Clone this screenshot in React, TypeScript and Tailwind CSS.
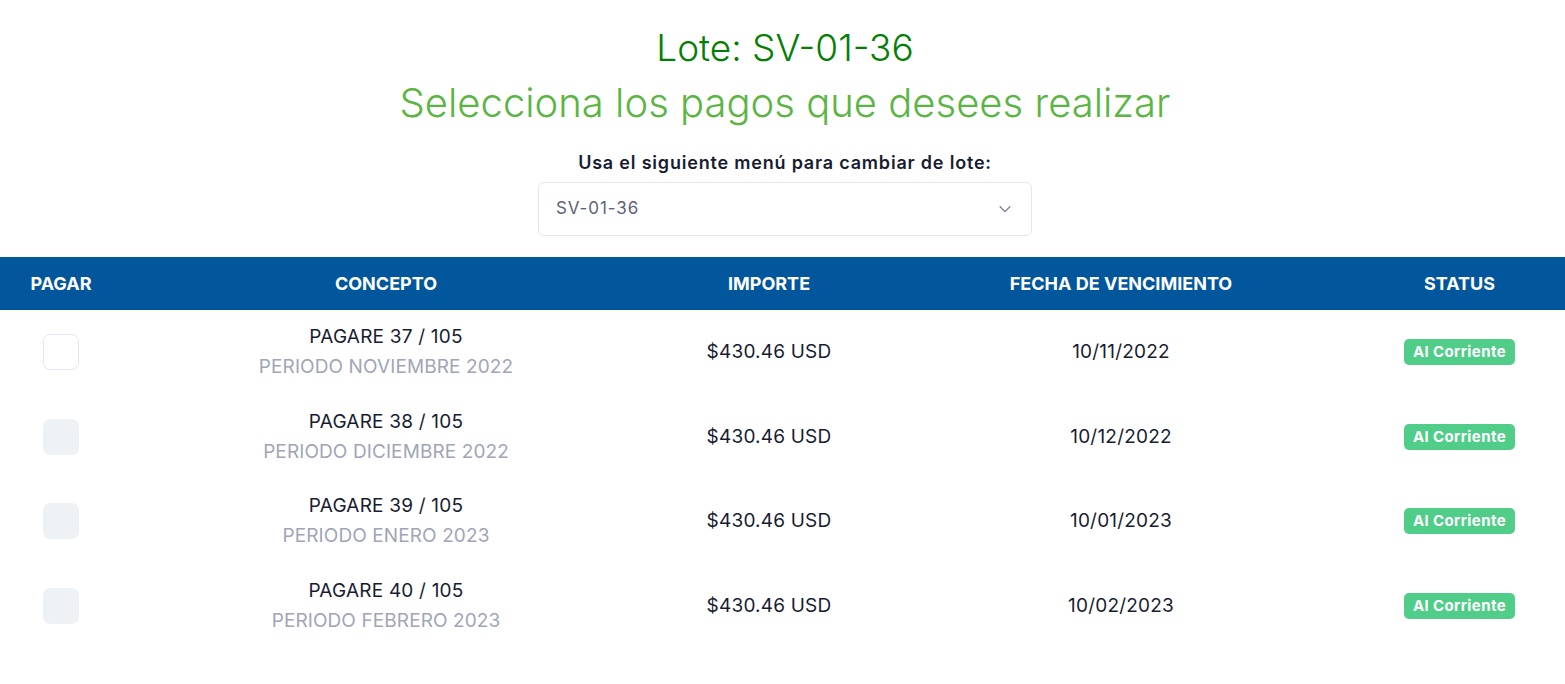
import React from "react";

const rows = [
  { n: 37, periodo: "PERIODO NOVIEMBRE 2022", fecha: "10/11/2022", enabled: true },
  { n: 38, periodo: "PERIODO DICIEMBRE 2022", fecha: "10/12/2022", enabled: false },
  { n: 39, periodo: "PERIODO ENERO 2023", fecha: "10/01/2023", enabled: false },
  { n: 40, periodo: "PERIODO FEBRERO 2023", fecha: "10/02/2023", enabled: false },
];

export default function App() {
  return (
    <div className="min-h-screen bg-white font-['Inter',sans-serif] text-[#181c32]">
      <div className="flex flex-col items-center pl-[5px] pt-[24px]">
        <h1 className="text-[37px] leading-[48px] font-light text-[#038003]">Lote: SV-01-36</h1>
        <h2 className="mt-[6px] text-[40px] leading-[50px] font-light text-[#5bb543]">
          Selecciona los pagos que desees realizar
        </h2>
        <label className="mt-[23px] text-[18px] leading-[24px] font-semibold tracking-[0.8px] text-[#181c32]">
          Usa el siguiente menú para cambiar de lote:
        </label>
        <div className="mt-[7px] flex h-[54px] w-[494px] items-center justify-between rounded-[6px] border border-[#e4e6ef] pl-[17px] pr-[19px]">
          <span className="text-[17px] tracking-[0.9px] text-[#5e6278]">SV-01-36</span>
          <svg width="14" height="14" viewBox="0 0 16 16" fill="none">
            <path d="M2.5 5.5L8 11l5.5-5.5" stroke="#7e8299" strokeWidth="1.6" strokeLinecap="round" strokeLinejoin="round" />
          </svg>
        </div>
      </div>
      <table className="mt-[21px] w-full border-collapse">
        <thead>
          <tr className="h-[53px] bg-[#02569c] text-white">
            <th className="w-[122px] text-center text-[18px] font-bold">PAGAR</th>
            <th className="w-[528px] text-center text-[18px] font-bold">CONCEPTO</th>
            <th className="w-[238px] text-center text-[18px] font-bold">IMPORTE</th>
            <th className="w-[466px] text-center text-[18px] font-bold">FECHA DE VENCIMIENTO</th>
            <th className="text-center text-[18px] font-bold">STATUS</th>
          </tr>
        </thead>
        <tbody>
          {rows.map((r) => (
            <tr key={r.n} className="h-[84.6px]">
              <td className="text-center">
                <div className="flex justify-center">
                  {r.enabled ? (
                    <div className="h-[36px] w-[36px] rounded-[7px] border border-[#e4e6ef] bg-white" />
                  ) : (
                    <div className="h-[36px] w-[36px] rounded-[7px] bg-[#eff2f5]" />
                  )}
                </div>
              </td>
              <td className="text-center">
                <div className="text-[19px] leading-[30px] tracking-[0.2px] text-[#181c32]">PAGARE {r.n} / 105</div>
                <div className="text-[19px] leading-[30px] tracking-[0.1px] text-[#a1a5b7]">{r.periodo}</div>
              </td>
              <td className="text-center text-[19px] tracking-[0.2px] text-[#181c32]">$430.46 USD</td>
              <td className="text-center text-[19px] tracking-[0.2px] text-[#181c32]">{r.fecha}</td>
              <td className="text-center">
                <span className="inline-block rounded-[5px] bg-[#50cd89] px-[9px] py-[3px] text-[15px] font-bold leading-[20px] tracking-[0.4px] text-white">
                  Al Corriente
                </span>
              </td>
            </tr>
          ))}
        </tbody>
      </table>
    </div>
  );
}
